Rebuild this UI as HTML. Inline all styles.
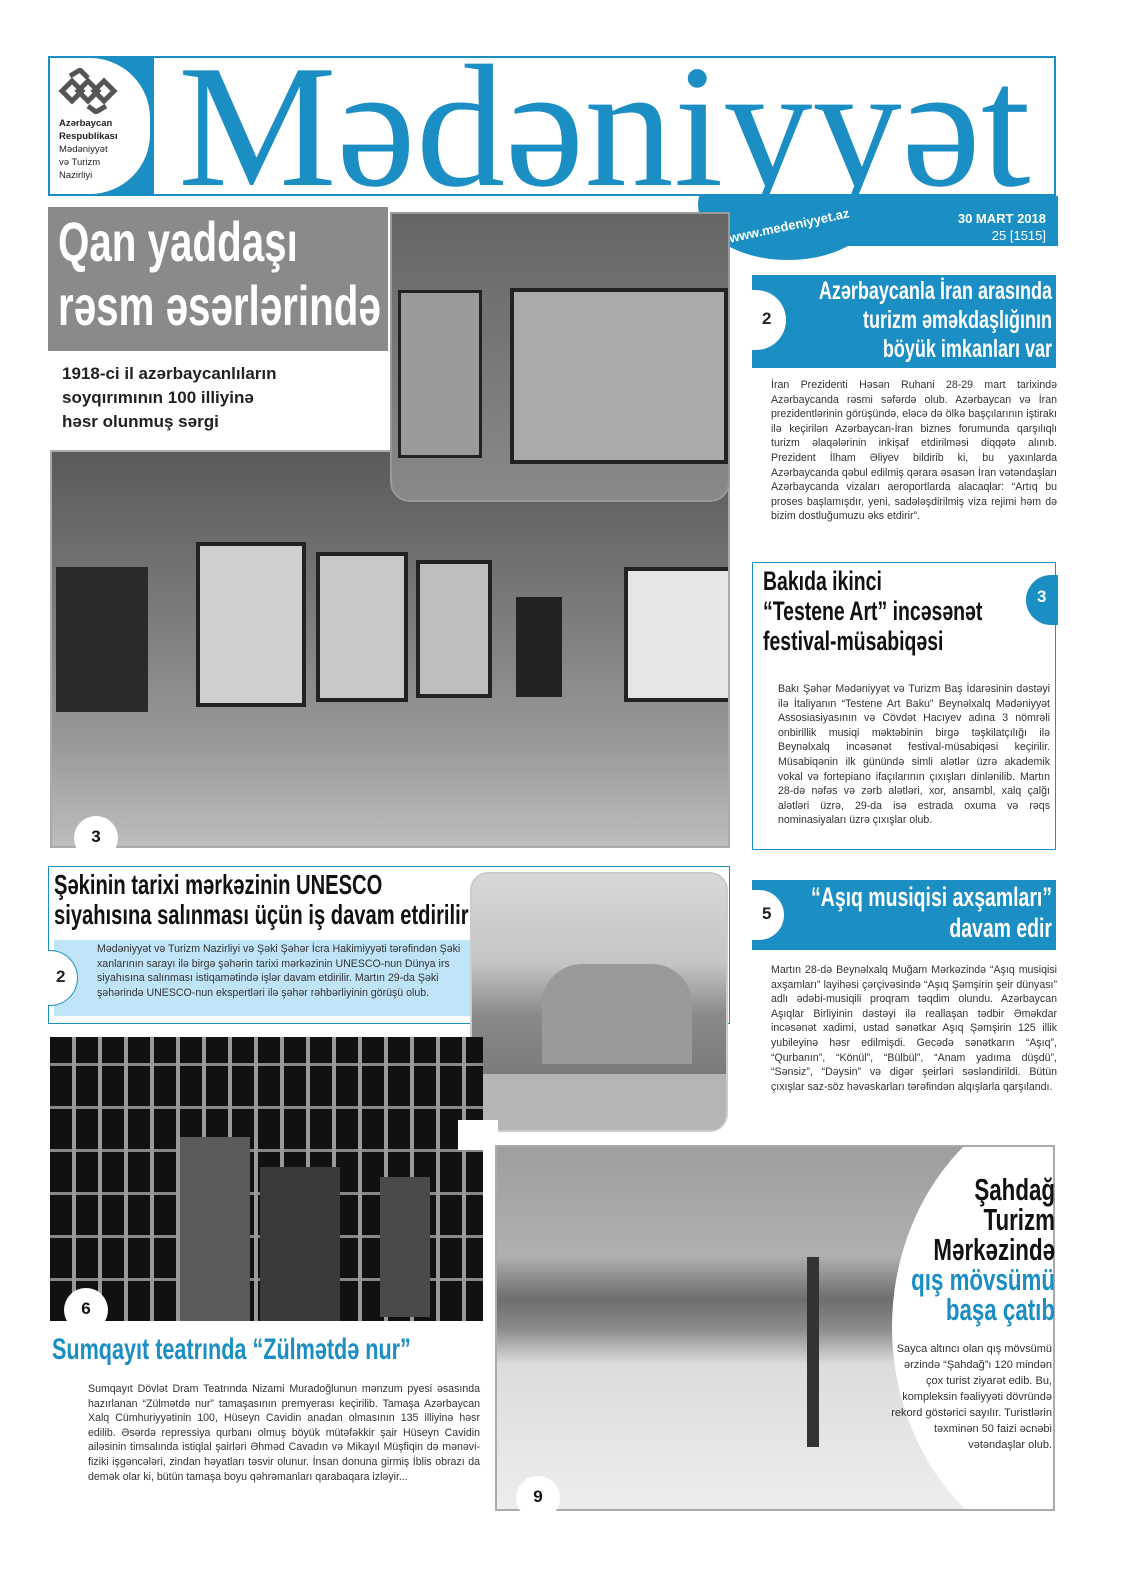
<!DOCTYPE html>
<html><head><meta charset="utf-8"><style>
*{margin:0;padding:0;box-sizing:border-box}
body{width:1122px;height:1588px;background:#fff;position:relative;overflow:hidden;font-family:"Liberation Sans",sans-serif;color:#222}
.a{position:absolute}
.cond{font-family:"Liberation Sans",sans-serif;font-weight:bold;white-space:nowrap;transform:scaleX(0.72);transform-origin:left top}
.cr{transform-origin:right top;text-align:right}
.txt{font-size:10.6px;line-height:14.6px;text-align:justify;color:#333}
.blue{color:#1b8ec4}
.circ{position:absolute;width:44px;height:44px;border-radius:50%;background:#fff;font-weight:bold;font-size:17px;text-align:center;line-height:42px;color:#111}
.ph{position:absolute;overflow:hidden}
</style></head><body>

<!-- Header -->
<div class="a" style="left:48px;top:56px;width:1008px;height:140px;border:2px solid #1b8ec4"></div>
<div class="a" style="left:50px;top:58px;width:104px;height:136px;background:#1b8ec4"></div>
<div class="a" style="left:50px;top:58px;width:100px;height:136px;background:#fff;border-radius:0 60px 60px 0"></div>
<svg class="a" style="left:56px;top:68px" width="64" height="46" viewBox="0 0 64 46"><g fill="none" stroke="#555" stroke-width="5"><path d="M6 23l10-10 10 10-10 10z"/><path d="M22 23l10-10 10 10-10 10z"/><path d="M38 23l10-10 10 10-10 10z"/><path d="M14 8l10-6 8 8M32 38l8 6 10-6"/></g></svg>
<div class="a" style="left:59px;top:117px;font-size:9.5px;line-height:13px;color:#222"><b>Azərbaycan<br>Respublikası</b><br>Mədəniyyət<br>və Turizm<br>Nazirliyi</div>
<div class="a blue" style="left:178px;top:39px;font-family:'Liberation Serif',serif;font-size:175px;line-height:175px;white-space:nowrap;transform:scaleX(1.02);transform-origin:left">Mədəniyyət</div>
<div class="a" style="left:700px;top:196px;width:358px;height:50px;background:#1b8ec4"></div>
<div class="a" style="left:698px;top:150px;width:180px;height:110px;border-radius:50%;background:#1b8ec4;clip-path:inset(46px 0 0 0)"></div>
<div class="a" style="left:728px;top:218px;color:#fff;font-weight:bold;font-size:13px;transform:rotate(-12deg)">www.medeniyyet.az</div>
<div class="a" style="left:930px;top:210px;width:116px;text-align:right;color:#fff;font-weight:bold;font-size:13px;line-height:17px">30 MART 2018<br><span style="font-weight:normal">25 [1515]</span></div>

<!-- Lead -->
<div class="a" style="left:48px;top:207px;width:340px;height:144px;background:#8a8a8a"></div>
<div class="a cond" style="left:58px;top:210px;color:#fff;font-size:56px;line-height:64px">Qan yaddaşı<br>rəsm əsərlərində</div>
<div class="a" style="left:62px;top:362px;font-weight:bold;font-size:17px;line-height:24px;color:#222">1918-ci il azərbaycanlıların<br>soyqırımının 100 illiyinə<br>həsr olunmuş sərgi</div>
<div class="ph" style="left:50px;top:450px;width:680px;height:398px;background:linear-gradient(180deg,#5a5a5a 0%,#7a7a7a 40%,#9a9a9a 75%,#bdbdbd 100%);border:2px solid #aaa">
 <div class="a" style="left:4px;top:115px;width:92px;height:145px;background:#2a2a2a"></div>
 <div class="a" style="left:144px;top:90px;width:110px;height:165px;background:#d0d0d0;border:4px solid #222"></div>
 <div class="a" style="left:264px;top:100px;width:92px;height:150px;background:#c8c8c8;border:4px solid #222"></div>
 <div class="a" style="left:364px;top:108px;width:76px;height:138px;background:#bdbdbd;border:4px solid #222"></div>
 <div class="a" style="left:464px;top:145px;width:46px;height:100px;background:#222"></div>
 <div class="a" style="left:572px;top:115px;width:108px;height:135px;background:#e5e5e5;border:4px solid #222"></div>
</div>
<div class="ph" style="left:390px;top:212px;width:340px;height:290px;background:linear-gradient(180deg,#666,#8a8a8a);border:2px solid #999;border-radius:0 0 20px 20px">
 <div class="a" style="left:6px;top:76px;width:84px;height:168px;background:#9a9a9a;border:3px solid #222"></div>
 <div class="a" style="left:118px;top:74px;width:218px;height:176px;background:#aaa;border:4px solid #222"></div>
</div>
<div class="circ" style="left:74px;top:816px">3</div>

<!-- Right column article 1 -->
<div class="a" style="left:752px;top:275px;width:304px;height:93px;background:#1b8ec4"></div>
<div class="a" style="left:752px;top:290px;width:34px;height:60px;background:#fff;border-radius:0 30px 30px 0"></div>
<div class="a" style="left:762px;top:309px;font-weight:bold;font-size:17px">2</div>
<div class="a cond cr" style="left:700px;top:277px;width:352px;color:#fff;font-size:25px;line-height:29px">Azərbaycanla İran arasında<br>turizm əməkdaşlığının<br>böyük imkanları var</div>
<div class="a txt" style="left:771px;top:378px;width:286px">İran Prezidenti Həsən Ruhani 28-29 mart tarixində Azərbaycanda rəsmi səfərdə olub. Azərbaycan və İran prezidentlərinin görüşündə, eləcə də ölkə başçılarının iştirakı ilə keçirilən Azərbaycan-İran biznes forumunda qarşılıqlı turizm əlaqələrinin inkişaf etdirilməsi diqqətə alınıb. Prezident İlham Əliyev bildirib ki, bu yaxınlarda Azərbaycanda qəbul edilmiş qərara əsasən İran vətəndaşları Azərbaycanda vizaları aeroportlarda alacaqlar: “Artıq bu proses başlamışdır, yeni, sadələşdirilmiş viza rejimi həm də bizim dostluğumuzu əks etdirir”.</div>

<!-- Article 2 -->
<div class="a" style="left:752px;top:562px;width:304px;height:288px;border:1.5px solid #1b8ec4"></div>
<div class="a" style="left:1026px;top:575px;width:32px;height:50px;background:#1b8ec4;border-radius:30px 0 0 30px"></div>
<div class="a" style="left:1037px;top:587px;color:#fff;font-weight:bold;font-size:17px">3</div>
<div class="a cond" style="left:763px;top:566px;font-size:27px;line-height:30px;color:#111">Bakıda ikinci<br>“Testene Art” incəsənət<br>festival-müsabiqəsi</div>
<div class="a txt" style="left:778px;top:682px;width:272px">Bakı Şəhər Mədəniyyət və Turizm Baş İdarəsinin dəstəyi ilə İtaliyanın “Testene Art Baku” Beynəlxalq Mədəniyyət Assosiasiyasının və Cövdət Hacıyev adına 3 nömrəli onbirillik musiqi məktəbinin birgə təşkilatçılığı ilə Beynəlxalq incəsənət festival-müsabiqəsi keçirilir. Müsabiqənin ilk günündə simli alətlər üzrə akademik vokal və fortepiano ifaçılarının çıxışları dinlənilib. Martın 28-də nəfəs və zərb alətləri, xor, ansambl, xalq çalğı alətləri üzrə, 29-da isə estrada oxuma və rəqs nominasiyaları üzrə çıxışlar olub.</div>

<!-- Article 3 -->
<div class="a" style="left:752px;top:880px;width:304px;height:70px;background:#1b8ec4"></div>
<div class="a" style="left:752px;top:890px;width:32px;height:50px;background:#fff;border-radius:0 30px 30px 0"></div>
<div class="a" style="left:762px;top:904px;font-weight:bold;font-size:17px">5</div>
<div class="a cond cr" style="left:700px;top:882px;width:352px;color:#fff;font-size:27px;line-height:31px">“Aşıq musiqisi axşamları”<br>davam edir</div>
<div class="a txt" style="left:771px;top:963px;width:286px">Martın 28-də Beynəlxalq Muğam Mərkəzində “Aşıq musiqisi axşamları” layihəsi çərçivəsində “Aşıq Şəmşirin şeir dünyası” adlı ədəbi-musiqili proqram təqdim olundu. Azərbaycan Aşıqlar Birliyinin dəstəyi ilə reallaşan tədbir Əməkdar incəsənət xadimi, ustad sənətkar Aşıq Şəmşirin 125 illik yubileyinə həsr edilmişdi. Gecədə sənətkarın “Aşıq”, “Qurbanın”, “Könül”, “Bülbül”, “Anam yadıma düşdü”, “Sənsiz”, “Dəysin” və digər şeirləri səsləndirildi. Bütün çıxışlar saz-söz həvəskarları tərəfindən alqışlarla qarşılandı.</div>

<!-- Şəki -->
<div class="a" style="left:48px;top:866px;width:682px;height:158px;border:1.5px solid #1b8ec4"></div>
<div class="a cond" style="left:54px;top:870px;font-size:28px;line-height:30px;color:#111">Şəkinin tarixi mərkəzinin UNESCO<br>siyahısına salınması üçün iş davam etdirilir</div>
<div class="a" style="left:54px;top:940px;width:416px;height:76px;background:#bfe3f7"></div>
<div class="a" style="left:48px;top:950px;width:30px;height:56px;background:#fff;border:1.5px solid #1b8ec4;border-left:none;border-radius:0 30px 30px 0"></div>
<div class="a" style="left:56px;top:967px;font-weight:bold;font-size:17px">2</div>
<div class="a" style="left:97px;top:942px;width:370px;font-size:10.6px;line-height:14.7px;color:#333">Mədəniyyət və Turizm Nazirliyi və Şəki Şəhər İcra Hakimiyyəti tərəfindən Şəki xanlarının sarayı ilə birgə şəhərin tarixi mərkəzinin UNESCO-nun Dünya irs siyahısına salınması istiqamətində işlər davam etdirilir. Martın 29-da Şəki şəhərində UNESCO-nun ekspertləri ilə şəhər rəhbərliyinin görüşü olub.</div>
<div class="ph" style="left:470px;top:872px;width:258px;height:260px;border-radius:18px;background:linear-gradient(180deg,#d8d8d8 0%,#c4c4c4 35%,#8a8a8a 55%,#7a7a7a 80%,#a8a8a8 100%);border:2px solid #ccc">
 <div class="a" style="left:70px;top:90px;width:150px;height:100px;background:#9a9a9a;border-radius:40px 40px 0 0"></div>
 <div class="a" style="left:0;top:200px;width:258px;height:60px;background:#b5b5b5"></div>
</div>

<!-- theatre -->
<div class="ph" style="left:50px;top:1037px;width:433px;height:284px;background:#111;background-image:repeating-linear-gradient(90deg,transparent 0 22px,#9a9a9a 22px 26px),repeating-linear-gradient(0deg,transparent 0 40px,#888 40px 43px)">
 <div class="a" style="left:130px;top:100px;width:70px;height:184px;background:#5a5a5a"></div>
 <div class="a" style="left:210px;top:130px;width:80px;height:154px;background:#3a3a3a"></div>
 <div class="a" style="left:330px;top:140px;width:50px;height:140px;background:#4a4a4a"></div>
</div>
<div class="circ" style="left:64px;top:1288px">6</div>
<div class="a cond blue" style="left:52px;top:1333px;font-size:30px;line-height:34px">Sumqayıt teatrında “Zülmətdə nur”</div>
<div class="a txt" style="left:88px;top:1382px;width:392px">Sumqayıt Dövlət Dram Teatrında Nizami Muradoğlunun mənzum pyesi əsasında hazırlanan “Zülmətdə nur” tamaşasının premyerası keçirilib. Tamaşa Azərbaycan Xalq Cümhuriyyətinin 100, Hüseyn Cavidin anadan olmasının 135 illiyinə həsr edilib. Əsərdə repressiya qurbanı olmuş böyük mütəfəkkir şair Hüseyn Cavidin ailəsinin timsalında istiqlal şairləri Əhməd Cavadın və Mikayıl Müşfiqin də mənəvi-fiziki işgəncələri, zindan həyatları təsvir olunur. İnsan donuna girmiş İblis obrazı da demək olar ki, bütün tamaşa boyu qəhrəmanları qarabaqara izləyir...</div>

<!-- mountain -->
<div class="a" style="left:458px;top:1120px;width:40px;height:30px;background:#fff"></div>
<div class="ph" style="left:495px;top:1145px;width:560px;height:366px;background:linear-gradient(180deg,#9e9e9e 0%,#b0b0b0 30%,#6e6e6e 42%,#8a8a8a 50%,#dcdcdc 60%,#ededed 100%);border:2px solid #aaa">
 <div class="a" style="left:310px;top:110px;width:12px;height:190px;background:#333"></div>
 <div class="a" style="left:395px;top:-60px;width:420px;height:480px;border-radius:50%;background:#fff"></div>
</div>
<div class="a cond cr" style="left:800px;top:1175px;width:255px;font-size:31px;line-height:30px;color:#111">Şahdağ<br>Turizm<br>Mərkəzində<br><span class="blue">qış mövsümü<br>başa çatıb</span></div>
<div class="a" style="left:890px;top:1341px;width:162px;text-align:right;font-size:11px;line-height:16px;color:#333">Sayca altıncı olan qış mövsümü ərzində “Şahdağ”ı 120 mindən çox turist ziyarət edib. Bu, kompleksin fəaliyyəti dövründə rekord göstərici sayılır. Turistlərin təxminən 50 faizi əcnəbi vətəndaşlar olub.</div>
<div class="circ" style="left:516px;top:1476px">9</div>
</body></html>
